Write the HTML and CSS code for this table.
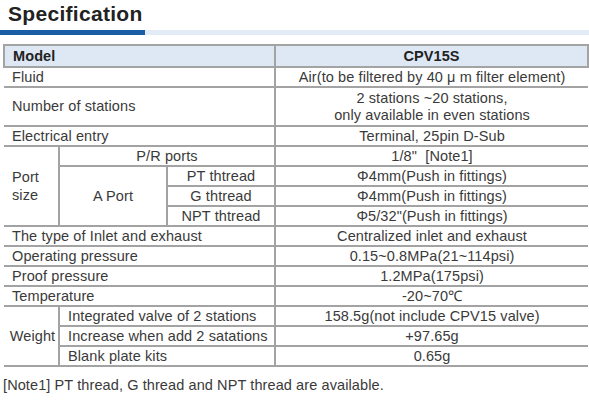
FILE: index.html
```html
<!DOCTYPE html>
<html>
<head>
<meta charset="utf-8">
<link rel="stylesheet" href="styles.css">
</head>
<body>
<h1 class="title">Specification</h1>
<div class="rule"><div class="rule-dark"></div><div class="rule-light"></div></div>
<table class="spec">
<colgroup><col class="c1"><col class="c2"><col class="c3"><col class="c4"></colgroup>
<tr class="head"><td colspan="3" class="lbl">Model</td><td class="val">CPV15S</td></tr>
<tr><td colspan="3" class="lbl">Fluid</td><td class="val">Air(to be filtered by 40 μ m filter element)</td></tr>
<tr class="tall"><td colspan="3" class="lbl">Number of stations</td><td class="val">2 stations ~20 stations,<br>only available in even stations</td></tr>
<tr><td colspan="3" class="lbl">Electrical entry</td><td class="val">Terminal, 25pin D-Sub</td></tr>
<tr><td rowspan="4" class="lbl port">Port<br>size</td><td colspan="2" class="mid">P/R ports</td><td class="val">1/8"&nbsp; [Note1]</td></tr>
<tr><td rowspan="3" class="mid">A Port</td><td class="mid">PT thtread</td><td class="val">Φ4mm(Push in fittings)</td></tr>
<tr><td class="mid">G thtread</td><td class="val">Φ4mm(Push in fittings)</td></tr>
<tr><td class="mid">NPT thtread</td><td class="val">Φ5/32"(Push in fittings)</td></tr>
<tr><td colspan="3" class="lbl">The type of Inlet and exhaust</td><td class="val">Centralized inlet and exhaust</td></tr>
<tr><td colspan="3" class="lbl">Operating pressure</td><td class="val">0.15~0.8MPa(21~114psi)</td></tr>
<tr><td colspan="3" class="lbl">Proof pressure</td><td class="val">1.2MPa(175psi)</td></tr>
<tr><td colspan="3" class="lbl">Temperature</td><td class="val">-20~70℃</td></tr>
<tr><td rowspan="3" class="weight">Weight</td><td colspan="2" class="lbl">Integrated valve of 2 stations</td><td class="val">158.5g(not include CPV15 valve)</td></tr>
<tr><td colspan="2" class="lbl">Increase when add 2 satations</td><td class="val">+97.65g</td></tr>
<tr><td colspan="2" class="lbl">Blank plate kits</td><td class="val">0.65g</td></tr>
</table>
<p class="note">[Note1] PT thread, G thread and NPT thread are available.</p>
</body>
</html>
```
FILE: styles.css
```css
html, body {
  margin: 0;
  padding: 0;
  background: #fff;
}
body {
  font-family: "Liberation Sans", Arial, sans-serif;
  color: #3a3a3a;
}
.title {
  margin: 2px 0 0 8px;
  font-size: 21px;
  line-height: 24px;
  font-weight: bold;
  letter-spacing: 0.3px;
  color: #222;
}
.rule {
  display: flex;
  align-items: center;
  margin-top: 4px;
  height: 5px;
}
.rule-dark {
  width: 145px;
  height: 5px;
  background: #1b5ea6;
}
.rule-light {
  flex: 1;
  height: 5px;
  background: #e3ecf6;
}
.spec {
  margin: 9px 0 0 3px;
  width: 584px;
  border-collapse: collapse;
  table-layout: fixed;
  font-size: 14.5px;
  letter-spacing: 0.1px;
}
.c1 { width: 55px; }
.c2 { width: 108px; }
.c3 { width: 108px; }
.c4 { width: 313px; }
.spec td {
  border-top: 2px solid #a3a3a3;
  border-bottom: 2px solid #a3a3a3;
  height: 18px;
  padding: 0;
  line-height: 17px;
  vertical-align: middle;
  white-space: nowrap;
}
.spec tr.tall td { height: 37px; }
.spec tr.head td {
  background: #dde8f4;
  font-weight: bold;
  color: #222;
  height: 20px;
}
.spec tr.head td:first-child { border-left: 2px solid #a3a3a3; }
.spec tr.head td:last-child { border-right: 2px solid #a3a3a3; }
.spec td.val {
  text-align: center;
  border-left: 2px solid #a3a3a3;
}
.spec td.lbl {
  text-align: left;
  padding-left: 8px;
}
.spec td.port {
  padding-left: 8px;
  line-height: 18px;
  border-right: 2px solid #a3a3a3;
}
.spec td.mid {
  text-align: center;
  border-left: 2px solid #a3a3a3;
}
.spec td.weight {
  text-align: center;
  border-right: 2px solid #a3a3a3;
  padding-left: 3px;
}
.note {
  margin: 10px 0 0 3px;
  font-size: 14.5px;
  line-height: 17px;
  letter-spacing: 0.1px;
  color: #3a3a3a;
}
```
